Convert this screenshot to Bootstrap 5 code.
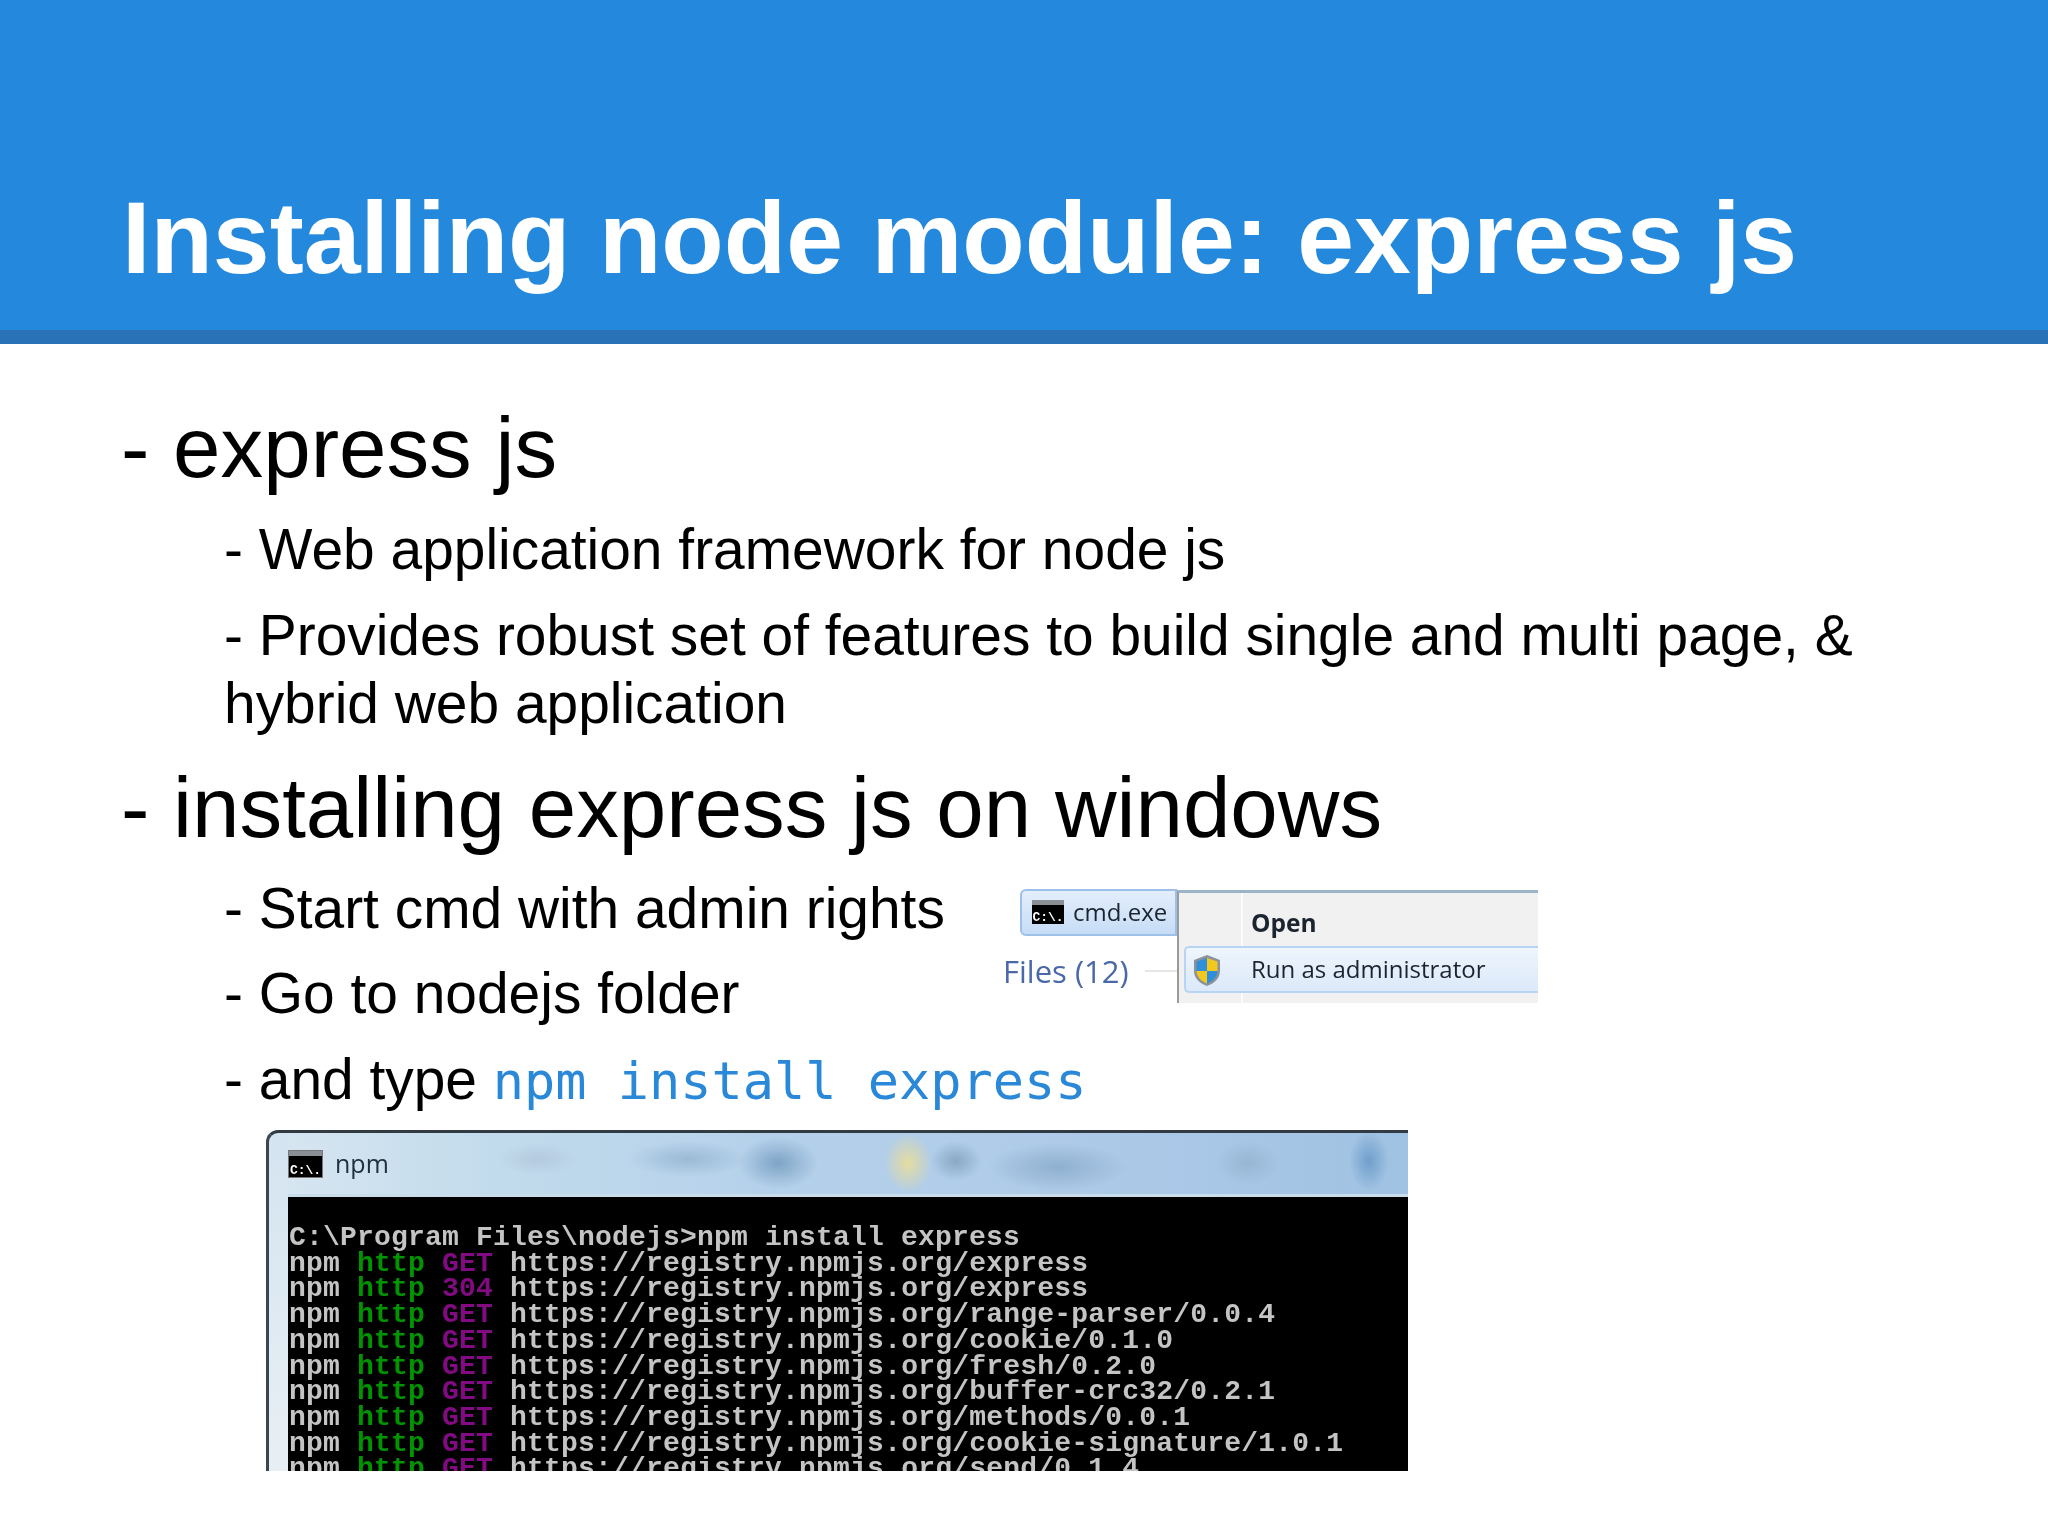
<!DOCTYPE html>
<html lang="en">
<head>
<meta charset="utf-8">
<title>Installing node module: express js</title>
<link href="https://cdn.jsdelivr.net/npm/bootstrap@5.3.0/dist/css/bootstrap.min.css" rel="stylesheet">
<style>
html,body{height:100%;}
body{background:#fff;color:#000;font-family:"Liberation Sans",Arial,sans-serif;overflow:hidden;}
.slide-head{height:344px;background:#2488dd;border-bottom:14px solid #2a72b8;padding:0 0 0 122px;}
.slide-title{font-family:"Liberation Sans",Arial,sans-serif;font-weight:700;font-size:102.2px;line-height:1;color:#fff;margin:0 0 41px;}
.slide-body{padding:0 0 0 121px;}
.lvl1{font-size:85.3px;line-height:90px;margin:0;}
.lvl2{font-size:56.9px;line-height:68.500px;margin:0 0 17px 103px;width:1720px;}
.code-blue{font-family:"DejaVu Sans Mono",monospace;font-size:51.900px;color:#2a88d8;}
.gap-a{margin-top:59px;}
.gap-b{margin-top:22px;}
.gap-c{margin-top:21px;}
.gap-d{margin-top:25px;}
.left-col{width:899px;flex:none;}
.menu-shot{position:relative;width:518px;height:114px;margin-top:15px;font-family:"Open Sans",sans-serif;color:#1c2430;font-size:24px;filter:blur(.5px);flex:none;}
.menu-pill{position:absolute;left:0;top:0;width:157px;height:47px;background:linear-gradient(#e4eefb,#c6dcf6);border:2px solid #9cc0e8;border-radius:6px 0 0 6px;padding-left:10px;gap:9px;}
.cmd-ico{display:inline-flex;align-items:flex-end;justify-content:center;background:#000;color:#fff;border-top:5px solid #8a8f96;font:700 13px/1 "Liberation Mono",monospace;flex:none;}
.cmd-ico-a{width:32px;height:24px;}
.cmd-ico-b{width:33px;height:26px;outline:1px solid #777;}
.menu-files{position:absolute;left:-17px;top:62px;color:#4a69a8;font-size:31px;line-height:40px;}
.menu-rule{position:absolute;left:125px;top:81px;width:32px;height:2px;background:#e4e6e8;}
.menu-panel{position:absolute;left:157px;top:1px;right:0;bottom:0;background:#f1f1f1;border-top:3px solid #9db4c8;border-left:2px solid #9a9a9a;}
.menu-gutter{position:absolute;left:62px;top:0;bottom:0;width:2px;background:#fbfbfb;}
.menu-open{position:absolute;left:72px;top:10px;font-weight:700;font-size:24.500px;line-height:40px;}
.menu-row{position:absolute;left:5px;right:0;top:53px;height:47px;background:linear-gradient(#eef5fd,#dbe9f9);border:2px solid #b8d4f5;border-right:0;border-radius:5px 0 0 5px;}
.menu-run{position:absolute;left:65px;top:0;line-height:42px;}
.menu-shield{position:absolute;left:6px;top:6px;}
.term{width:1142px;height:341px;margin:-2px 0 0 145px;overflow:hidden;border-left:3px solid #3a4650;border-top:3px solid #333b42;border-top-left-radius:12px;background:linear-gradient(#d4e4f0,#e8eff4);filter:blur(.45px);}
.term-bar{height:64px;margin-left:19px;background:
 radial-gradient(ellipse 20px 30px at 1081px 28px,#6f9fcb 0,rgba(111,159,203,0) 100%),
 radial-gradient(ellipse 24px 30px at 620px 30px,#e5dca0 0,rgba(229,220,160,0) 100%),
 radial-gradient(ellipse 26px 20px at 668px 28px,#88a8c4 0,rgba(136,168,196,0) 100%),
 radial-gradient(ellipse 70px 24px at 770px 34px,#8eb0cf 0,rgba(142,176,207,0) 100%),
 radial-gradient(ellipse 32px 22px at 960px 30px,#96b6d4 0,rgba(150,182,212,0) 100%),
 radial-gradient(ellipse 40px 26px at 490px 30px,#7ea4c6 0,rgba(126,164,198,0) 100%),
 radial-gradient(ellipse 60px 18px at 400px 26px,#9cbad6 0,rgba(156,186,214,0) 100%),
 radial-gradient(ellipse 40px 16px at 250px 26px,#b4cade 0,rgba(180,202,222,0) 100%),
 linear-gradient(90deg,#d6e5f0 0,#c2dbec 18%,#b4d0ea 45%,#aecae8 70%,#a0c2e2 100%);
 border-bottom:3px solid #c9dcea;gap:13px;padding-left:1px;}
.term-name{font-family:"Open Sans",sans-serif;font-size:25px;color:#20303e;line-height:1;}
.term-screen{margin:0 0 0 19px;height:280px;background:#000;color:#c4c4c4;padding:28px 0 0 1px;font:700 28px/25.7px "Liberation Mono",monospace;letter-spacing:.2px;white-space:pre;overflow:hidden;}
.t-green{color:#009400;}
.t-purple{color:#820a82;}
</style>
</head>
<body>
<header class="slide-head d-flex align-items-end">
  <h1 class="slide-title">Installing node module: express js</h1>
</header>
<main class="slide-body">
  <p class="lvl1 gap-a">- express js</p>
  <p class="lvl2 gap-b">- Web application framework for node js</p>
  <p class="lvl2">- Provides robust set of features to build single and multi page, &amp; hybrid web application</p>
  <p class="lvl1 gap-d">- installing express js on windows</p>
  <div class="d-flex gap-c">
    <div class="left-col">
      <p class="lvl2">- Start cmd with admin rights</p>
      <p class="lvl2">- Go to nodejs folder</p>
    </div>
    <div class="menu-shot">
      <div class="menu-pill d-flex align-items-center"><span class="cmd-ico cmd-ico-a">C:\.</span><span>cmd.exe</span></div>
      <div class="menu-files">Files (12)</div>
      <div class="menu-rule"></div>
      <div class="menu-panel">
        <div class="menu-gutter"></div>
        <div class="menu-open">Open</div>
        <div class="menu-row">
          <svg class="menu-shield" width="30" height="33" viewBox="0 0 30 33" aria-hidden="true">
            <path d="M15 1 L28 6 V17 C28 25 21 30 15 32 C9 30 2 25 2 17 V6 Z" fill="#8b9299"/>
            <path d="M15 4 V17 H4.500 V7.500 Z" fill="#2f8fd8"/>
            <path d="M15 4 L25.500 7.500 V17 H15 Z" fill="#f2c81e"/>
            <path d="M4.500 17 H15 V29.500 C10 27.500 4.800 23.500 4.500 17 Z" fill="#f2c81e"/>
            <path d="M15 17 H25.500 C25.200 23.500 20 27.500 15 29.500 Z" fill="#2f8fd8"/>
          </svg>
          <div class="menu-run">Run as administrator</div>
        </div>
      </div>
    </div>
  </div>
  <p class="lvl2">- and type <span class="code-blue">npm install express</span></p>
  <section class="term">
    <div class="term-bar d-flex align-items-center"><span class="cmd-ico cmd-ico-b">C:\.</span><span class="term-name">npm</span></div>
<div class="term-screen">C:\Program Files\nodejs&gt;npm install express
npm <span class="t-green">http</span> <span class="t-purple">GET</span> https://registry.npmjs.org/express
npm <span class="t-green">http</span> <span class="t-purple">304</span> https://registry.npmjs.org/express
npm <span class="t-green">http</span> <span class="t-purple">GET</span> https://registry.npmjs.org/range-parser/0.0.4
npm <span class="t-green">http</span> <span class="t-purple">GET</span> https://registry.npmjs.org/cookie/0.1.0
npm <span class="t-green">http</span> <span class="t-purple">GET</span> https://registry.npmjs.org/fresh/0.2.0
npm <span class="t-green">http</span> <span class="t-purple">GET</span> https://registry.npmjs.org/buffer-crc32/0.2.1
npm <span class="t-green">http</span> <span class="t-purple">GET</span> https://registry.npmjs.org/methods/0.0.1
npm <span class="t-green">http</span> <span class="t-purple">GET</span> https://registry.npmjs.org/cookie-signature/1.0.1
npm <span class="t-green">http</span> <span class="t-purple">GET</span> https://registry.npmjs.org/send/0.1.4</div>
  </section>
</main>
<script src="https://cdn.jsdelivr.net/npm/bootstrap@5.3.0/dist/js/bootstrap.bundle.min.js"></script>
</body>
</html>
